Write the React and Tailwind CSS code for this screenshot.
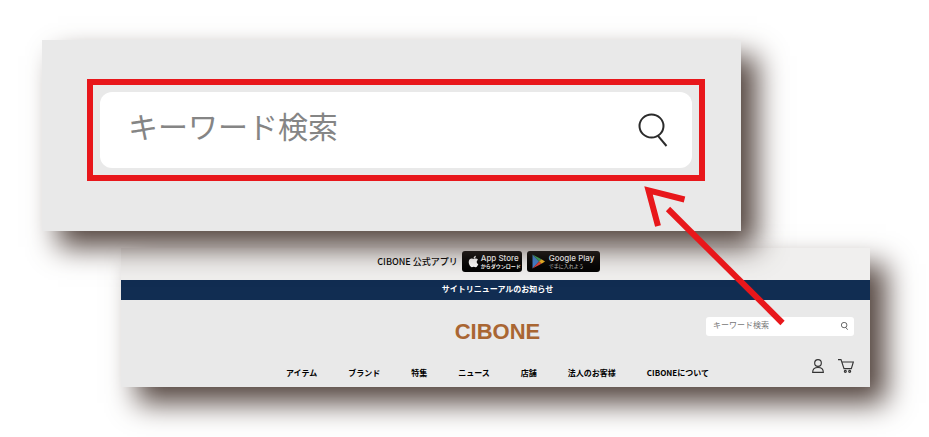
import React, { useState } from "react";
import { FaApple } from "react-icons/fa";

const navItems = ["アイテム", "ブランド", "特集", "ニュース", "店舗", "法人のお客様", "CIBONEについて"];

const SearchIcon = ({ className, strokeWidth }) => (
  <svg viewBox="0 0 30 34" fill="none" stroke="#2b2b2b" strokeWidth={strokeWidth} className={className}>
    <ellipse cx="13.5" cy="13" rx="12" ry="11.5" />
    <path d="M20 22.8 L28.5 33" />
  </svg>
);

const PlayIcon = () => (
  <svg viewBox="0 0 26 30" className="h-[15px] w-[13px] shrink-0">
    <path d="M1 1 L14 15 L1 29 Z" fill="#3f7fd0" />
    <path d="M1 1 L19 10.5 L14 15 Z" fill="#3aa35c" />
    <path d="M19 10.5 L26 15 L19 19.5 L14 15 Z" fill="#f6b820" />
    <path d="M1 29 L14 15 L19 19.5 Z" fill="#e0433c" />
  </svg>
);

const UserIcon = () => (
  <svg viewBox="0 0 36 42" fill="none" stroke="#333" strokeWidth="3.4" className="h-[14px] w-3">
    <circle cx="18" cy="12" r="10" />
    <path d="M2 40 C2 31 8 25.5 18 25.5 C28 25.5 34 31 34 40 Z" />
  </svg>
);

const CartIcon = () => (
  <svg viewBox="0 0 48 42" fill="none" stroke="#333" strokeWidth="3.4" className="h-[14px] w-4">
    <path d="M0 2 H9 L18 29 H40 L46 9 H12" />
    <circle cx="22" cy="37" r="3" />
    <circle cx="35" cy="37" r="3" />
  </svg>
);

const Arrow = () => (
  <svg
    viewBox="640 182 150 148"
    fill="none"
    stroke="#e8171b"
    strokeWidth="6"
    className="pointer-events-none absolute top-[142px] -right-[49px] h-[148px] w-[150px]"
  >
    <path d="M684.5 199.5 L648.5 190.3 L658 226" />
    <path d="M668 209 L782.5 323" />
  </svg>
);

const App = () => {
  const [keyword, setKeyword] = useState("");

  const handleSubmit = (e) => {
    e.preventDefault();
  };

  return (
    <div className="bg-white pt-10 pb-[50px] font-['Liberation_Sans','Noto_Sans_CJK_JP',sans-serif] text-black">
      {/* Enlarged search */}
      <section className="relative z-10 ml-[42px] mr-[188px] bg-[#e9e9e9] pt-[39px] pr-9 pb-[50px] pl-[45px] shadow-[16px_16px_27px_#54453f]">
        <div className="border-6 border-[#e8171b] px-[7px] py-[7px]">
          <form onSubmit={handleSubmit} className="flex h-[76px] items-center rounded-xl bg-white pr-6 pl-7">
            <input
              type="text"
              aria-label="キーワード検索"
              placeholder="キーワード検索"
              value={keyword}
              onChange={(e) => setKeyword(e.target.value)}
              className="min-w-0 flex-1 pb-1 text-[30px] leading-10 font-normal outline-none placeholder:text-[#858585] placeholder:opacity-100"
            />
            <button type="submit" aria-label="検索">
              <SearchIcon strokeWidth="2" className="h-[34px] w-[30px]" />
            </button>
          </form>
        </div>
        <Arrow />
      </section>

      {/* Site header */}
      <header className="mt-[17px] mr-[59px] ml-[121px] bg-[#e9e9e9] shadow-[16px_16px_27px_#54453f]">
        <div className="flex items-center justify-center bg-[#f0efee] pt-[3px] pr-[14px] pb-2">
          <p className="mr-1 whitespace-nowrap text-[9px] leading-3 font-medium font-['Noto_Sans_CJK_JP',sans-serif]">CIBONE 公式アプリ</p>
          <a href="#" className="mr-[5px] flex h-[21px] w-[60px] items-center gap-px rounded-[3px] bg-black pl-[5px] text-white">
            <FaApple size={13} className="shrink-0" />
            <span className="flex flex-col whitespace-nowrap">
              <span className="text-[8px] leading-[9px] font-medium font-['Inter',sans-serif]">App Store</span>
              <span className="text-[5px] leading-[6px] font-bold">からダウンロード</span>
            </span>
          </a>
          <a href="#" className="flex h-[21px] w-[73px] items-center gap-1 rounded-[3px] bg-black pl-[5px] text-white">
            <PlayIcon />
            <span className="flex flex-col whitespace-nowrap">
              <span className="text-[8px] leading-[9px] font-medium font-['Inter',sans-serif]">Google Play</span>
              <span className="text-[5px] leading-[6px] text-[#c8c8c8]">で手に入れよう</span>
            </span>
          </a>
        </div>

        <a href="#" className="block bg-[#112d52] pl-1 text-center text-[8px] leading-5 font-bold text-white">
          サイトリニューアルのお知らせ
        </a>

        <div className="grid grid-cols-[1fr_auto_1fr] items-center pt-4 pr-4 pl-5">
          <a href="#" className="col-start-2 text-[22px] leading-8 font-bold text-[#a96633]">
            CIBONE
          </a>
          <form onSubmit={handleSubmit} className="mb-3 flex h-[19px] w-[148px] items-center justify-self-end rounded-[3px] bg-white pr-[6px] pl-[7px]">
            <input
              type="text"
              aria-label="サイト内検索"
              placeholder="キーワード検索"
              className="min-w-0 flex-1 text-[8px] leading-3 outline-none placeholder:text-[#777] placeholder:opacity-100"
            />
            <button type="submit" aria-label="検索">
              <SearchIcon strokeWidth="3" className="h-2 w-[7px]" />
            </button>
          </form>
        </div>

        <div className="grid grid-cols-[1fr_auto_1fr] items-end pt-[11px] pr-4 pb-2 pl-5">
          <nav className="col-start-2 flex gap-[31px] whitespace-nowrap text-[8px] leading-3 font-bold font-['Noto_Sans_CJK_JP',sans-serif]">
            {navItems.map((item) => (
              <a key={item} href="#">
                {item}
              </a>
            ))}
          </nav>
          <div className="mb-[6px] flex gap-[14px] justify-self-end">
            <a href="#" aria-label="マイページ">
              <UserIcon />
            </a>
            <a href="#" aria-label="カート">
              <CartIcon />
            </a>
          </div>
        </div>
      </header>
    </div>
  );
};

export default App;
